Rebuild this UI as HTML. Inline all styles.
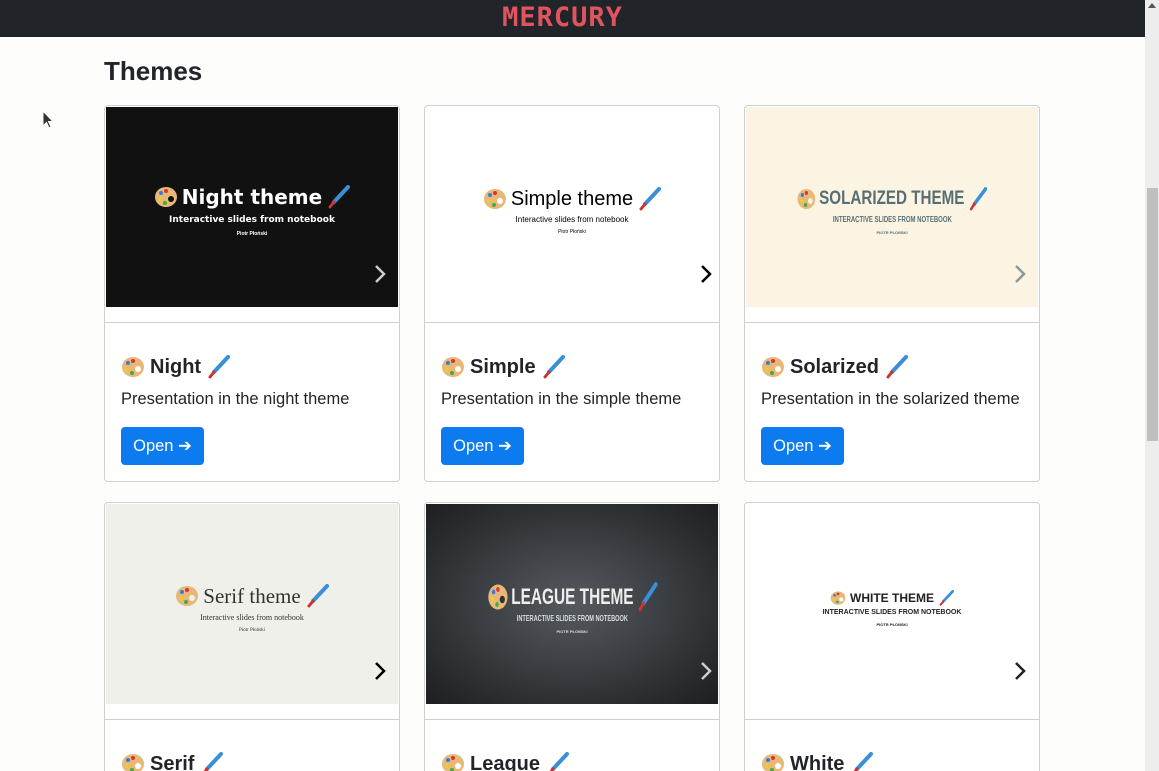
<!DOCTYPE html>
<html style="width:1159px;height:771px;overflow:hidden"><head><meta charset="utf-8"><style>
*{margin:0;padding:0;box-sizing:border-box}
body{width:1159px;height:771px;overflow:hidden;background:#fdfdfc;font-family:"Liberation Sans",sans-serif;position:relative}
.nav{position:absolute;left:0;top:0;width:1145px;height:37px;background:#212529;text-align:center}
.logo{color:#e0535f;font:bold 27px/35px "DejaVu Sans Mono","Liberation Mono",monospace;letter-spacing:1px;display:inline-block;margin-left:-20px}
.sb{position:absolute;left:1145px;top:0;width:14px;height:771px;background:#ededed}
.thumb{position:absolute;left:1147px;top:188px;width:11px;height:253px;background:#bfbfbe}
h2{position:absolute;left:104px;top:56px;font:bold 26px "Liberation Sans",sans-serif;color:#212529}
.card{position:absolute;width:296px;height:377px;border:1px solid #d0d0d0;border-radius:4px;background:#fff;overflow:hidden}
.prev{position:absolute;left:1px;top:1px;width:292px;height:200px;display:flex;flex-direction:column;align-items:center;justify-content:center;padding-top:8px}
.sep{position:absolute;left:0;top:216px;width:100%;border-top:1px solid #d0d0d0}
.title{position:absolute;left:16px;top:249px;font:bold 20px "Liberation Sans",sans-serif;color:#212529;display:flex;align-items:center;gap:5px}
.desc{position:absolute;left:16px;top:284px;font:16.5px "Liberation Sans",sans-serif;color:#212529;white-space:nowrap}
.btn{position:absolute;left:16px;top:321px;width:83px;height:38px;background:#0d7bf0;border-radius:4px;color:#fff;font:16.5px/38px "Liberation Sans",sans-serif;text-align:center}
.chev{position:absolute;right:12px;top:158px;width:14px;height:20px}
.st{display:flex;align-items:center;gap:4px;margin-top:0 !important}
.sub{margin-top:6px}
</style></head><body>
<div class="nav"><span class="logo">MERCURY</span></div>
<div class="sb"></div><div class="thumb"></div>
<div style="position:absolute;left:1148px;top:3px;width:0;height:0;border-left:4px solid transparent;border-right:4px solid transparent;border-bottom:5px solid #555"></div>
<svg style="position:absolute;left:42px;top:110px" width="12" height="20" viewBox="0 0 12 20"><path d="M1 1 L1 16 L4.5 12.5 L7 18 L9 17 L6.5 11.5 L11 11.5 Z" fill="#333" stroke="#fff" stroke-width="1"/></svg>
<h2>Themes</h2>

<div class="card" style="left:104px;top:105px">
 <div class="prev" style="background:#111">
  <div class="st" style="color:#fff;font:bold 20px 'DejaVu Sans',sans-serif"><svg width="24" height="24" viewBox="0 0 24 24"><ellipse cx="12" cy="12" rx="11" ry="10" fill="#e8b878"/><circle cx="7" cy="8" r="2" fill="#3a7bd5"/><circle cx="12" cy="6" r="2" fill="#d33"/><circle cx="6" cy="14" r="2" fill="#ec3"/><circle cx="11" cy="18" r="2" fill="#4a4"/><circle cx="17" cy="14" r="3" fill="#111"/></svg>Night theme<svg width="24" height="24" viewBox="0 0 24 24"><path d="M22 2 L8 17" stroke="#3a8fd8" stroke-width="4" stroke-linecap="round"/><path d="M8 17 L4 22" stroke="#c33" stroke-width="3" stroke-linecap="round"/></svg></div>
  <div class="sub" style="color:#fff;font:bold 9px 'DejaVu Sans',sans-serif">Interactive slides from notebook</div>
  <div class="sub" style="color:#fff;font:bold 5px sans-serif">Piotr Płoński</div>
 </div>
 <svg class="chev" viewBox="0 0 14 20"><path d="M3 2 L11 10 L3 18" stroke="#ccc" stroke-width="2.5" fill="none"/></svg>
 <div class="sep"></div>
 <div class="title"><svg width="24" height="24" viewBox="0 0 24 24"><ellipse cx="12" cy="12" rx="11" ry="10" fill="#e8b878"/><circle cx="7" cy="8" r="2" fill="#3a7bd5"/><circle cx="12" cy="6" r="2" fill="#d33"/><circle cx="6" cy="14" r="2" fill="#ec3"/><circle cx="11" cy="18" r="2" fill="#4a4"/><circle cx="17" cy="14" r="3" fill="#fff"/></svg>Night<svg width="24" height="24" viewBox="0 0 24 24"><path d="M22 2 L8 17" stroke="#3a8fd8" stroke-width="4" stroke-linecap="round"/><path d="M8 17 L4 22" stroke="#c33" stroke-width="3" stroke-linecap="round"/></svg></div>
 <div class="desc">Presentation in the night theme</div>
 <div class="btn">Open ➔</div>
</div>

<div class="card" style="left:424px;top:105px">
 <div class="prev" style="background:#fff">
  <div class="st" style="color:#000;font:20px 'Liberation Sans',sans-serif"><svg width="24" height="24" viewBox="0 0 24 24"><ellipse cx="12" cy="12" rx="11" ry="10" fill="#e8b878"/><circle cx="7" cy="8" r="2" fill="#3a7bd5"/><circle cx="12" cy="6" r="2" fill="#d33"/><circle cx="6" cy="14" r="2" fill="#ec3"/><circle cx="11" cy="18" r="2" fill="#4a4"/><circle cx="17" cy="14" r="3" fill="#fff"/></svg>Simple theme<svg width="24" height="24" viewBox="0 0 24 24"><path d="M22 2 L8 17" stroke="#3a8fd8" stroke-width="4" stroke-linecap="round"/><path d="M8 17 L4 22" stroke="#c33" stroke-width="3" stroke-linecap="round"/></svg></div>
  <div class="sub" style="color:#000;font:8px 'Liberation Sans',sans-serif;margin-top:4px">Interactive slides from notebook</div>
  <div class="sub" style="color:#000;font:5px sans-serif;margin-top:5px">Piotr Płoński</div>
 </div>
 <svg class="chev" viewBox="0 0 14 20" style="right:6px"><path d="M3 2 L11 10 L3 18" stroke="#000" stroke-width="2.5" fill="none"/></svg>
 <div class="sep"></div>
 <div class="title"><svg width="24" height="24" viewBox="0 0 24 24"><ellipse cx="12" cy="12" rx="11" ry="10" fill="#e8b878"/><circle cx="7" cy="8" r="2" fill="#3a7bd5"/><circle cx="12" cy="6" r="2" fill="#d33"/><circle cx="6" cy="14" r="2" fill="#ec3"/><circle cx="11" cy="18" r="2" fill="#4a4"/><circle cx="17" cy="14" r="3" fill="#fff"/></svg>Simple<svg width="24" height="24" viewBox="0 0 24 24"><path d="M22 2 L8 17" stroke="#3a8fd8" stroke-width="4" stroke-linecap="round"/><path d="M8 17 L4 22" stroke="#c33" stroke-width="3" stroke-linecap="round"/></svg></div>
 <div class="desc">Presentation in the simple theme</div>
 <div class="btn">Open ➔</div>
</div>

<div class="card" style="left:744px;top:105px">
 <div class="prev" style="background:#fbf4e2">
  <div class="st" style="color:#586e75;font:bold 19px 'Liberation Sans Narrow','Liberation Sans',sans-serif;transform:scaleX(0.8)"><svg width="24" height="24" viewBox="0 0 24 24"><ellipse cx="12" cy="12" rx="11" ry="10" fill="#e8b878"/><circle cx="7" cy="8" r="2" fill="#3a7bd5"/><circle cx="12" cy="6" r="2" fill="#d33"/><circle cx="6" cy="14" r="2" fill="#ec3"/><circle cx="11" cy="18" r="2" fill="#4a4"/><circle cx="17" cy="14" r="3" fill="#fbf4e2"/></svg>SOLARIZED THEME<svg width="24" height="24" viewBox="0 0 24 24"><path d="M22 2 L8 17" stroke="#3a8fd8" stroke-width="4" stroke-linecap="round"/><path d="M8 17 L4 22" stroke="#c33" stroke-width="3" stroke-linecap="round"/></svg></div>
  <div class="sub" style="color:#586e75;font:bold 8px sans-serif;transform:scaleX(0.75);margin-top:4px">INTERACTIVE SLIDES FROM NOTEBOOK</div>
  <div class="sub" style="color:#586e75;font:bold 4px sans-serif">PIOTR PŁOŃSKI</div>
 </div>
 <svg class="chev" viewBox="0 0 14 20"><path d="M3 2 L11 10 L3 18" stroke="#8a9a9a" stroke-width="2.5" fill="none"/></svg>
 <div class="sep"></div>
 <div class="title"><svg width="24" height="24" viewBox="0 0 24 24"><ellipse cx="12" cy="12" rx="11" ry="10" fill="#e8b878"/><circle cx="7" cy="8" r="2" fill="#3a7bd5"/><circle cx="12" cy="6" r="2" fill="#d33"/><circle cx="6" cy="14" r="2" fill="#ec3"/><circle cx="11" cy="18" r="2" fill="#4a4"/><circle cx="17" cy="14" r="3" fill="#fff"/></svg>Solarized<svg width="24" height="24" viewBox="0 0 24 24"><path d="M22 2 L8 17" stroke="#3a8fd8" stroke-width="4" stroke-linecap="round"/><path d="M8 17 L4 22" stroke="#c33" stroke-width="3" stroke-linecap="round"/></svg></div>
 <div class="desc">Presentation in the solarized theme</div>
 <div class="btn">Open ➔</div>
</div>

<div class="card" style="left:104px;top:502px">
 <div class="prev" style="background:#eff0ea">
  <div class="st" style="color:#333;font:21px 'Liberation Serif',serif"><svg width="24" height="24" viewBox="0 0 24 24"><ellipse cx="12" cy="12" rx="11" ry="10" fill="#e8b878"/><circle cx="7" cy="8" r="2" fill="#3a7bd5"/><circle cx="12" cy="6" r="2" fill="#d33"/><circle cx="6" cy="14" r="2" fill="#ec3"/><circle cx="11" cy="18" r="2" fill="#4a4"/><circle cx="17" cy="14" r="3" fill="#eff0ea"/></svg>Serif theme<svg width="24" height="24" viewBox="0 0 24 24"><path d="M22 2 L8 17" stroke="#3a8fd8" stroke-width="4" stroke-linecap="round"/><path d="M8 17 L4 22" stroke="#c33" stroke-width="3" stroke-linecap="round"/></svg></div>
  <div class="sub" style="color:#333;font:8px 'Liberation Serif',serif;margin-top:4px">Interactive slides from notebook</div>
  <div class="sub" style="color:#333;font:5px serif">Piotr Płoński</div>
 </div>
 <svg class="chev" viewBox="0 0 14 20"><path d="M3 2 L11 10 L3 18" stroke="#000" stroke-width="2.5" fill="none"/></svg>
 <div class="sep"></div>
 <div class="title"><svg width="24" height="24" viewBox="0 0 24 24"><ellipse cx="12" cy="12" rx="11" ry="10" fill="#e8b878"/><circle cx="7" cy="8" r="2" fill="#3a7bd5"/><circle cx="12" cy="6" r="2" fill="#d33"/><circle cx="6" cy="14" r="2" fill="#ec3"/><circle cx="11" cy="18" r="2" fill="#4a4"/><circle cx="17" cy="14" r="3" fill="#fff"/></svg>Serif<svg width="24" height="24" viewBox="0 0 24 24"><path d="M22 2 L8 17" stroke="#3a8fd8" stroke-width="4" stroke-linecap="round"/><path d="M8 17 L4 22" stroke="#c33" stroke-width="3" stroke-linecap="round"/></svg></div>
</div>

<div class="card" style="left:424px;top:502px">
 <div class="prev" style="background:radial-gradient(ellipse at center,#555a5f 0%,#1c1e20 100%)">
  <div class="st" style="color:#eee;font:bold 22px 'Liberation Sans Narrow','Liberation Sans',sans-serif;transform:scaleX(0.7)"><svg width="30" height="30" viewBox="0 0 24 24"><ellipse cx="12" cy="12" rx="11" ry="10" fill="#e8b878"/><circle cx="7" cy="8" r="2" fill="#3a7bd5"/><circle cx="12" cy="6" r="2" fill="#d33"/><circle cx="6" cy="14" r="2" fill="#ec3"/><circle cx="11" cy="18" r="2" fill="#4a4"/><circle cx="17" cy="14" r="3" fill="#333"/></svg>LEAGUE THEME<svg width="30" height="30" viewBox="0 0 24 24"><path d="M22 2 L8 17" stroke="#3a8fd8" stroke-width="4" stroke-linecap="round"/><path d="M8 17 L4 22" stroke="#c33" stroke-width="3" stroke-linecap="round"/></svg></div>
  <div class="sub" style="color:#ddd;font:bold 8px sans-serif;transform:scaleX(0.7);margin-top:2px">INTERACTIVE SLIDES FROM NOTEBOOK</div>
  <div class="sub" style="color:#ddd;font:bold 4px sans-serif">PIOTR PŁOŃSKI</div>
 </div>
 <svg class="chev" viewBox="0 0 14 20" style="right:6px"><path d="M3 2 L11 10 L3 18" stroke="#ccc" stroke-width="2.5" fill="none"/></svg>
 <div class="sep"></div>
 <div class="title"><svg width="24" height="24" viewBox="0 0 24 24"><ellipse cx="12" cy="12" rx="11" ry="10" fill="#e8b878"/><circle cx="7" cy="8" r="2" fill="#3a7bd5"/><circle cx="12" cy="6" r="2" fill="#d33"/><circle cx="6" cy="14" r="2" fill="#ec3"/><circle cx="11" cy="18" r="2" fill="#4a4"/><circle cx="17" cy="14" r="3" fill="#fff"/></svg>League<svg width="24" height="24" viewBox="0 0 24 24"><path d="M22 2 L8 17" stroke="#3a8fd8" stroke-width="4" stroke-linecap="round"/><path d="M8 17 L4 22" stroke="#c33" stroke-width="3" stroke-linecap="round"/></svg></div>
</div>

<div class="card" style="left:744px;top:502px">
 <div class="prev" style="background:#fff">
  <div class="st" style="color:#222;font:bold 12px 'Liberation Sans',sans-serif"><svg width="16" height="16" viewBox="0 0 24 24"><ellipse cx="12" cy="12" rx="11" ry="10" fill="#e8b878"/><circle cx="7" cy="8" r="2" fill="#3a7bd5"/><circle cx="12" cy="6" r="2" fill="#d33"/><circle cx="6" cy="14" r="2" fill="#ec3"/><circle cx="11" cy="18" r="2" fill="#4a4"/><circle cx="17" cy="14" r="3" fill="#fff"/></svg>WHITE THEME<svg width="16" height="16" viewBox="0 0 24 24"><path d="M22 2 L8 17" stroke="#3a8fd8" stroke-width="4" stroke-linecap="round"/><path d="M8 17 L4 22" stroke="#c33" stroke-width="3" stroke-linecap="round"/></svg></div>
  <div class="sub" style="color:#222;font:bold 7px 'Liberation Sans',sans-serif;margin-top:3px">INTERACTIVE SLIDES FROM NOTEBOOK</div>
  <div class="sub" style="color:#222;font:bold 4px sans-serif">PIOTR PŁOŃSKI</div>
 </div>
 <svg class="chev" viewBox="0 0 14 20"><path d="M3 2 L11 10 L3 18" stroke="#222" stroke-width="2.5" fill="none"/></svg>
 <div class="sep"></div>
 <div class="title"><svg width="24" height="24" viewBox="0 0 24 24"><ellipse cx="12" cy="12" rx="11" ry="10" fill="#e8b878"/><circle cx="7" cy="8" r="2" fill="#3a7bd5"/><circle cx="12" cy="6" r="2" fill="#d33"/><circle cx="6" cy="14" r="2" fill="#ec3"/><circle cx="11" cy="18" r="2" fill="#4a4"/><circle cx="17" cy="14" r="3" fill="#fff"/></svg>White<svg width="24" height="24" viewBox="0 0 24 24"><path d="M22 2 L8 17" stroke="#3a8fd8" stroke-width="4" stroke-linecap="round"/><path d="M8 17 L4 22" stroke="#c33" stroke-width="3" stroke-linecap="round"/></svg></div>
</div>
</body></html>
